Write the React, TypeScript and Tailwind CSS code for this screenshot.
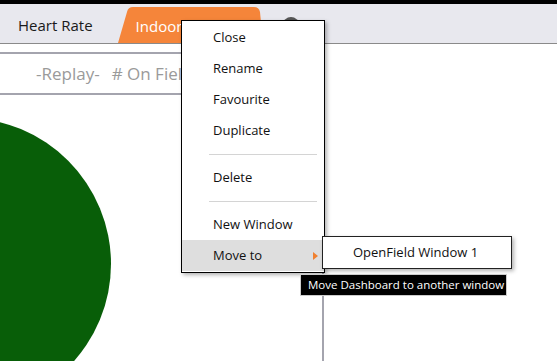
import { ReactNode } from "react";

const font = { fontFamily: '"Open Sans", "Noto Sans", sans-serif' };

function MenuItem({ children, active, arrow }: { children: ReactNode; active?: boolean; arrow?: boolean }) {
  return (
    <div className={`relative flex h-[31px] items-center pl-[31px] text-[13px] text-[#111] ${active ? "bg-[#dedede]" : ""}`}>
      {children}
      {arrow && (
        <span className="absolute right-[6px] top-1/2 h-0 w-0 -translate-y-1/2 border-y-[4px] border-l-[5px] border-y-transparent border-l-[#f08030]" />
      )}
    </div>
  );
}

function Separator() {
  return <div className="mb-[7px] ml-[27px] mr-[7px] mt-[8px] h-px bg-[#d4d4d4]" />;
}

export default function App() {
  return (
    <div className="relative h-[361px] w-[557px] overflow-hidden bg-white" style={font}>
      <div className="h-[4px] bg-black" />

      {/* Tab strip */}
      <div className="flex h-[40px] items-end border-b border-[#8a8a8a] bg-[#e8e8ee]">
        <div className="flex h-full items-center pl-[18px] pr-[25px] pt-[4px] text-[15px] text-[#1a1a1a]">Heart Rate</div>
        <div className="relative h-[36px] w-[145px]">
          <svg className="absolute inset-0" width="145" height="36" viewBox="0 0 145 36">
            <path d="M0 36 L9 5 Q10 0 15 0 L136 0 Q141 0 142 5 L145 36 Z" fill="#f5853a" />
          </svg>
          <span className="absolute left-[18px] top-[8px] text-[15px] text-white">Indoor</span>
        </div>
        <div className="mb-[10px] ml-[20px] h-[16px] w-[16px] self-end rounded-full bg-[#555]" />
      </div>

      {/* Dashboard panel */}
      <div className="ml-[-2px] mt-[8px] h-[320px] w-[326px] border-r-2 border-t-2 border-[#a4a4ae]">
        <div className="flex h-[41px] items-center border-b-2 border-[#a4a4ae] pl-[38px] pt-[1px] text-[17px] text-[#9a9a9a]">
          <span>-Replay-</span>
          <span className="ml-[12px]"># On Field</span>
        </div>
        <svg width="322" height="268" viewBox="0 0 322 268" className="block">
          <circle cx="-33" cy="169" r="146" fill="#085e08" />
        </svg>
      </div>

      {/* Context menu */}
      <div className="absolute left-[181px] top-[20px] w-[144px] border border-black bg-white py-[1px] shadow-[2px_2px_4px_rgba(0,0,0,0.3)]">
        <MenuItem>Close</MenuItem>
        <MenuItem>Rename</MenuItem>
        <MenuItem>Favourite</MenuItem>
        <MenuItem>Duplicate</MenuItem>
        <Separator />
        <MenuItem>Delete</MenuItem>
        <Separator />
        <MenuItem>New Window</MenuItem>
        <MenuItem active arrow>
          Move to
        </MenuItem>
      </div>

      {/* Submenu */}
      <div className="absolute left-[322px] top-[236px] flex h-[33px] w-[190px] items-center border border-[#222] bg-white pl-[30px] text-[13px] text-[#111] shadow-[2px_2px_4px_rgba(0,0,0,0.3)]">
        OpenField Window 1
      </div>

      {/* Tooltip */}
      <div className="absolute left-[300px] top-[274px] flex h-[22px] w-[207px] items-center border border-[#ccc] bg-black pl-[7px] text-[11.5px] text-white">
        Move Dashboard to another window
      </div>
    </div>
  );
}
